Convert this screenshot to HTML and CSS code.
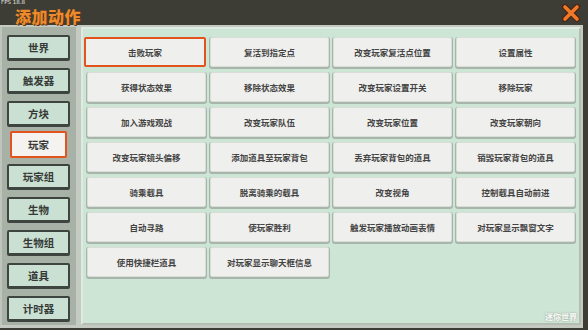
FILE: index.html
```html
<!DOCTYPE html>
<html lang="zh">
<head>
    <meta charset="UTF-8">
    <meta name="viewport" content="width=device-width, initial-scale=1.0">
    <title>添加动作</title>
    <link rel="stylesheet" href="styles.css">
</head>
<body>
    <div class="topbar">
        <span class="fps">FPS 18.8</span>
        <h1 class="title">添加动作</h1>
        <span class="close">
            <svg width="18" height="18" viewBox="0 0 18 18">
                <path d="M3 3 L15 15 M15 3 L3 15" stroke="#4a2410" stroke-width="6" stroke-linecap="round"/>
                <path d="M3 3 L15 15 M15 3 L3 15" stroke="#f07a2a" stroke-width="3.6" stroke-linecap="round"/>
            </svg>
        </span>
    </div>

    <div class="frame">
        <div class="sidebar">
            <div class="side-btn">世界</div>
            <div class="side-btn">触发器</div>
            <div class="side-btn">方块</div>
            <div class="side-btn active">玩家</div>
            <div class="side-btn">玩家组</div>
            <div class="side-btn">生物</div>
            <div class="side-btn">生物组</div>
            <div class="side-btn">道具</div>
            <div class="side-btn">计时器</div>
        </div>

        <div class="main">
            <div class="actions">
                <div class="action selected">击败玩家</div>
                <div class="action">复活到指定点</div>
                <div class="action">改变玩家复活点位置</div>
                <div class="action">设置属性</div>
                <div class="action">获得状态效果</div>
                <div class="action">移除状态效果</div>
                <div class="action">改变玩家设置开关</div>
                <div class="action">移除玩家</div>
                <div class="action">加入游戏观战</div>
                <div class="action">改变玩家队伍</div>
                <div class="action">改变玩家位置</div>
                <div class="action">改变玩家朝向</div>
                <div class="action">改变玩家镜头偏移</div>
                <div class="action">添加道具至玩家背包</div>
                <div class="action">丢弃玩家背包的道具</div>
                <div class="action">销毁玩家背包的道具</div>
                <div class="action">骑乘载具</div>
                <div class="action">脱离骑乘的载具</div>
                <div class="action">改变视角</div>
                <div class="action">控制载具自动前进</div>
                <div class="action">自动寻路</div>
                <div class="action">使玩家胜利</div>
                <div class="action">触发玩家播放动画表情</div>
                <div class="action">对玩家显示飘窗文字</div>
                <div class="action">使用快捷栏道具</div>
                <div class="action">对玩家显示聊天框信息</div>
            </div>
            <span class="watermark">迷你世界</span>
        </div>
    </div>
</body>
</html>
```

FILE: styles.css
```css
body { margin: 0; background: #3d3c35; font-family: "Noto Sans CJK SC", "Noto Sans", sans-serif; color: #3a3a3a; width: 588px; height: 330px; overflow: hidden; }

.topbar { height: 25px; box-sizing: border-box; display: flex; align-items: center; padding: 6px 8px 0 15px; position: relative; }
.fps { position: absolute; left: 1px; top: 0; font-size: 5.5px; line-height: 5px; color: #e8e8e0; font-family: "DejaVu Sans", sans-serif; }
.title { margin: 0; font-size: 16px; font-weight: 900; color: #ec8a2c; letter-spacing: 0.5px; text-shadow: 1px 1px 0 #5a3414; flex: 1; line-height: 1; }
.close { display: flex; margin-top: -5px; }

.frame { display: flex; gap: 5px; height: 298px; margin-right: 5px; background: #c4c9c1; padding: 2px 2px 3px 0; }

.sidebar { width: 76px; background: #a8b1a6; border-left: 2px solid #bfc5bd; box-sizing: border-box; padding: 8px 0 0 5px; display: flex; flex-direction: column; gap: 7px; }
.side-btn { width: 59px; height: 21px; background: #c9e0d3; border: 2px solid #3e443f; border-bottom-width: 3px; border-radius: 2px; display: flex; align-items: center; justify-content: center; font-size: 10.5px; font-weight: 700; color: #363a36; }
.side-btn.active { width: 53px; height: 23px; margin-left: 3px; margin-top: -3px; margin-bottom: -1px; background: #f4f3ef; border: 2px solid #e2531d; }

.main { flex: 1; position: relative; background: #cde5d5; border: 2px solid #dfeae2; border-right-color: #b6beb4; border-bottom-color: #b6beb4; }
.actions { display: grid; grid-template-columns: repeat(4, 119px); grid-auto-rows: 30px; gap: 5px 4px; padding: 8px 0 0 4px; }
.action { background: #efefed; border: 1px solid #d8ddd8; border-radius: 2px; box-shadow: 0 1px 0 1px #a7b5aa; display: flex; align-items: center; justify-content: center; font-size: 8.5px; font-weight: 700; color: #444; }
.action.selected { border: 2px solid #e2531d; box-shadow: none; margin-left: -3px; }
.watermark { position: absolute; right: 2px; bottom: 1px; font-size: 8px; font-weight: 900; color: #f4f6f2; text-shadow: 0 0 2px #8a968c; }
```
